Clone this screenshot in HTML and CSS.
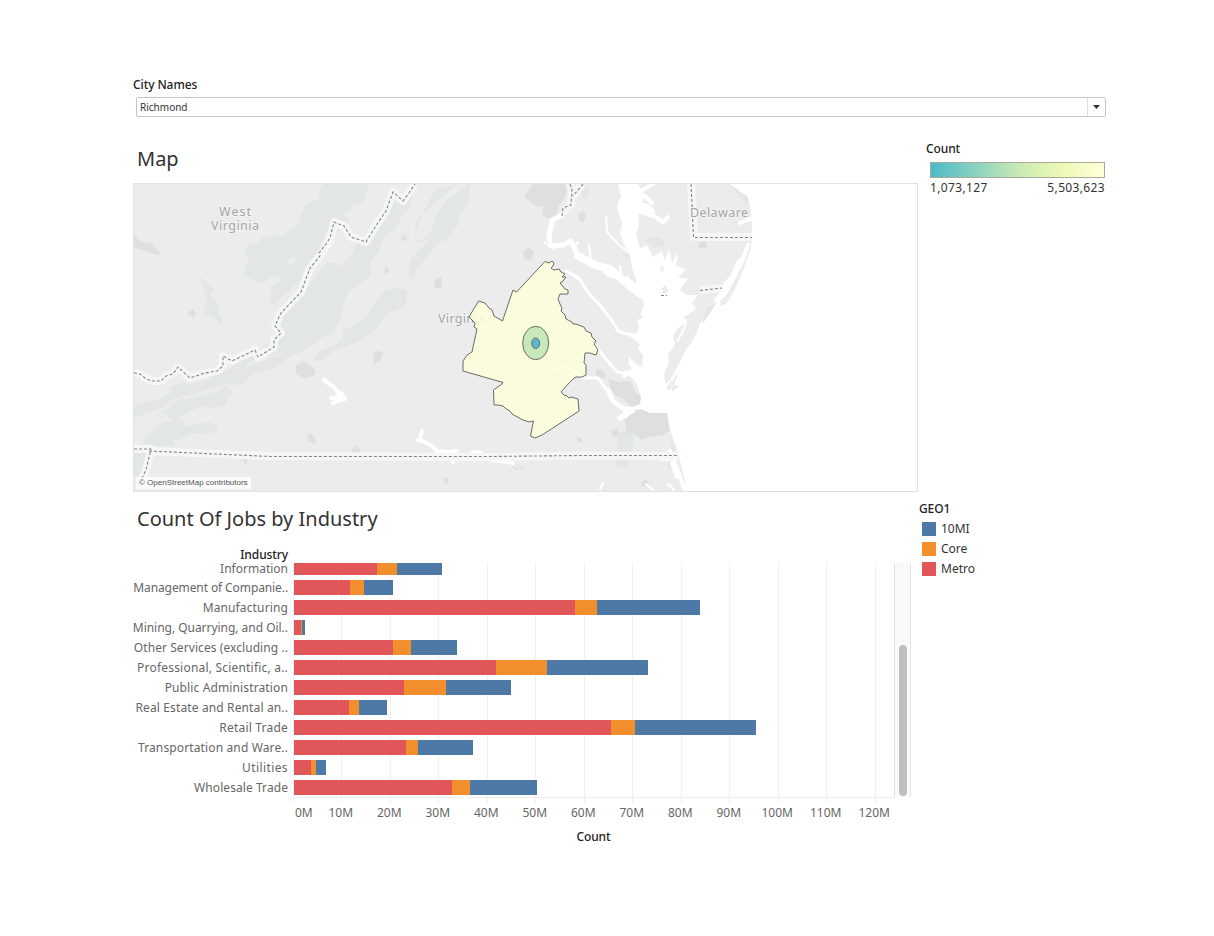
FILE: index.html
```html
<!DOCTYPE html>
<html lang="en">
<head>
<meta charset="utf-8">
<title>Count Of Jobs by Industry</title>
<link rel="stylesheet" href="styles.css">
</head>
<body>
<main class="dashboard">
  <section class="filter">
    <div class="label filter-label">City Names</div>
    <div class="select"><span class="select-value">Richmond</span><span class="select-arrow"><svg width="7" height="4" viewBox="0 0 7 4"><path d="M0 0h7L3.5 4z" fill="#333"/></svg></span></div>
  </section>
  <div class="row map-row">
    <section class="map-panel">
      <h2 class="title map-title">Map</h2>
      <div class="map">
        <svg class="map-svg" viewBox="134 184 783 307" width="783" height="307">
          <rect x="133" y="183" width="785" height="309" fill="#fff"/>
          <g fill="#ececec">
            <path d="M133 183H618L621 197L617 204L618 212L622 223L620 233L623 243L627 250L630 256L632 268L635 277L637 284L631 280L627 275L625 280L619 275L611 269L603 264L596 265L608 277L619 279L624 284L632 292L643 300L644 306L641 314L643 318L637 320L639 328L636 334L628 332L635 340L640 344L638 348L643 356L642 367L636 364L628 356L632 370L624 371L632 378L637 385L641 397L640 402L632 407L626 406L631 411L637 409L650 413L667 413L669 427L675 443L680 460L687 491H133Z"/>
            <path d="M637 183L644 195L640 201L652 206L656 213L645 215L638 213L639 225L636 234L640 248L647 245L653 257L662 251L665 261L669 248L672 263L678 252L676 266L686 270L678 277L688 279L680 289L686 295L698 295L692 303L696 309L684 317L686 322L677 329L673 337L675 344L668 355L669 362L664 374L665 381L668 391L671 388L673 374L680 362L686 350L693 340L700 324L706 313L716 301L719 294L724 282L731 275L736 262L743 255L749 241L752 230L751 211L748 197L738 190L730 184Z"/>
            <path d="M752 230L751 248L742 273L734 291L726 304L721 306L720 301L727 294L737 276L743 261L747 252ZM660 268l3-3 1 5-3 2zM662 288l4-3 2 7-5 2zM678 373l-4 12 5 1-7 6-1-4 3-15z"/>
          </g>
          <g fill="#e2e7e5">
            <path d="M323 183L318 192L320 198L307 204L302 211L298 225L290 230L282 237L275 235L262 237L257 243L249 244L245 251L248 258L244 276L254 280L262 284L270 278L277 276L282 279L271 288L270 303L276 304L280 299L298 283L312 266L326 232L333 222L347 228L352 210L364 200L370 183Z"/>
            <path d="M415 187L403 196L396 193L390 205L383 220L374 235L358 240L344 263L327 263L313 279L299 300L283 313L281 324L278 338L264 346L251 356L241 360L232 367L221 374L213 375L205 381L190 384L180 383L168 388L172 391L160 399L150 401L133 407V419L146 413L160 408L172 405L189 396L205 390L226 384L241 385L252 374L265 371L277 367L291 356L304 351L321 338L334 333L341 317L345 300L350 290L363 281L371 277L370 264L377 254L383 241L388 234L396 229L402 216L410 207Z"/>
            <path d="M457 184L440 188L433 193L423 213L416 232L415 242L424 238L430 233L437 214L446 201L457 193L468 184H470L468 203L459 215L458 225L447 240L437 243L427 257L418 268L413 280L408 273L410 260L423 247L428 239L415 243L416 220Z"/>
            <path d="M407 290V303L399 309L388 313L376 328L367 336L356 342L349 345L335 351L321 360L312 361L318 352L334 346L343 338L343 330L353 327L363 320L377 300L385 291L396 288Z"/>
            <path d="M163 413L180 399L195 398L205 394L218 391L226 385L233 393L227 397L226 405L215 408L205 406L195 409L184 414L173 420ZM144 440L160 424L178 418L184 421L183 428L195 424L209 422L218 427L216 432L204 434L190 433L180 440L173 440L173 446H141ZM133 453h16l-6 25-10-2zM199 276l9 8 7 6-7 4 5 4 6 6-1 9 4 5-1 8-8-9-5-2-5-1 2-7 2-8-2-6z"/>
            <path d="M617 433l17-4-2 25-6 15-10-3zM670 441l6 8-5 5-4 12 10 8-4-14zM645 240l6-3h8l6 4-2 6h-10zM729 184l19 13v8zM704 322l13-20-10 6-5 15zM580 190l5-6 5 5-4 13zM517 463l8 7-5 1z"/>
          </g>
          <g fill="#ececec">
            <path d="M329 241L334 222L347 228L356 241L353 252L341 267L334 262L325 262ZM372 183L365 204L372 213L376 220L388 191L382 184ZM355 202l-6 10-7 2 6 4 7-1 4-8zM292 257l-6 5 4 3 8-7zM182 400l36-8-34 5zM160 409l42-21-32 13zM244 368l48-18-39 10z"/>
          </g>
          <g fill="#dedfdf">
            <path d="M524 197l9-14h32l2 11-9 13-2 9-6 4-8-6 2-7-8-1zM133 234l8 8 11 1 3 4 6 7-6 1-9-4-13-4zM295 366l9-5 9 6 3 4-3 5-8 3-9-5zM373 354l6-4 4 3-2 7-7 5zM523 252l6-5 5 5-3 9-6-2zM434 281l7-5 1 13-7-1zM401 237l5-3 1 6-5 1zM578 214l5-3 3 3-2 8-5-1zM187 313l6-4 3 4-2 5-4-2zM307 436l4-3 5 7-2 4-5-3zM352 449l5-4 4 6-3 4-6-1zM384 269l4-2 1 5-4 2zM596 369l6 1 4 5-1 4-9-3zM443 479l5-2 1 5-4 2zM576 436l5 2 2 5-5-1zM609 379l10 3 12-1 4 11 6 4-1 8-8 3-9-8-7-3-6-8zM624 417l8-3 9-5 9 4h17l3 17-6 5-15 2-7 3-9-7-6 1zM611 431l6-3 2 8-7 1zM641 482l6-3 1 6-6 2zM699 243l5-3 3 4-2 5-6-1zM512 466l7 2-4 2zM625 254l4 1-3 4zM400 302l4-3 2 4zM243 459l5 1-3 5z"/>
          </g>
          <g fill="none" stroke="#fff" stroke-linejoin="round" stroke-linecap="round">
            <path stroke-width="5" d="M562 215L552 220L549 237L551 246L563 245L571 241L578 256L592 264L608 268L620 279L638 289"/>
            <path stroke-width="8" d="M578 256L595 265L610 269L624 281L640 294"/>
            <path stroke-width="2" d="M554 249l-10-7M606 216l1 16 12 13 8 6M589 245l2 16M620 266l2 14M566 271l12 8M578 242l-4 6"/>
            <path stroke-width="3" d="M566 271L578 277L589 294L599 304L613 322L618 331L636 337M596 347L606 359L617 372L632 374M583 378L598 378L606 389L614 402L622 406L626 417"/>
            <path stroke-width="5" d="M608 390L613 401L624 409L632 411L620 418"/>
            <path stroke-width="4" d="M630 363l7 8M636 368l-12 8M640 207l-2-15 10-5 6-4M640 212l14 4 9 6 5-5M716 300l10-12 14-22 8-21M637 205l7-10 8 8M740 223l12-5"/>
            <path stroke-width="4" d="M324 380l5 4 5 3 5 7 5 5M331 398l8-1 6 2-9 2M336 402l-3 1M341 393l4 5"/>
            <path stroke-width="4" d="M418 440l5 1 9 5 6 6 6-1M422 432l-2 6M440 453l17-2M450 453l3 9M473 452l8 1 3 4 9 3 20 3M670 451l7 18 8 22M672 463l5 14"/>
            <path stroke-width="2" d="M603 483l-3 6M646 484l8 7M668 484l6 6M678 340l7-13 1-7M662 460h8M664 388l12-14M422 429v4"/>
          </g>
          <g class="halo"><path d="M134 373L140 374L151 381L161 381L166 376L173 374L178 367L190 378L205 373L217 371L223 366L223 356L232 361L255 350L258 357L274 347L274 340L281 333L275 326L281 313L301 292L310 268L320 256L330 240L334 222L344 226L351 237L366 242L377 224L386 211L393 192L403 201L415 184M134 449H151L146 470L141 480M149 451L271 456L487 457L584 455.500L678 456M691 184L694 237H752M700 290.500L722 288M570 184L572 190L571 205L563 212M583 184L573 196"/></g>
          <g class="border"><path d="M134 373L140 374L145 378L151 381L161 381L166 376L173 374L178 367L190 378L205 373L217 371L223 366L223 356L232 361L255 350L258 357L274 347L274 340L281 333L275 326L281 313L301 292L310 268L320 256L319 253L326 244L330 238L334 222L344 226L351 237L366 242L377 224L386 211L393 192L403 201L409 193L415 184M134 449H151L146 470L141 480M149 451L271 456.500L487 456.500L584 455.500L678 455.500M691 184L693.500 237.500H752M700 290.500L722 288M570 184L572 190L571 205L563 208L562 216M583 184L573 196M661 295.500h6"/></g>
          <g class="place"><text x="219" y="216" textLength="32">West</text><text x="211" y="230" textLength="48">Virginia</text><text x="438" y="323" textLength="47">Virginia</text><text x="690" y="217" textLength="58">Delaware</text></g>
          <g stroke="#6b6b64" stroke-width="1" stroke-linejoin="round">
            <path fill="#fdfedb" fill-opacity=".88" d="M545 261.500L549 263L552 261L554 263L553 266L551 268L554 270L559 269L561 272L565 274L562 277L566 277L563 281L560 283L565 289L568 290L568 294H560L558 299L560 304L562 308L561 311L565 315L566 319L572 322L573 324L576 324L581 326L584 327L586 331L591 333L592 337L596 341L594 344L598 350L596 355L590 353L585 353L584 363L586 365V375L582 377L576 377L573 379L570 382L561 392L564 395L567 396L569 398L571 397L578 399L579 411L542 435L535 438L530.500 436L533.500 421L529 422L523 420L512 414L510 411L505 408L503 406L498 405H494L493.500 390L502 384L503 382.500L463 371V361L467 355L472 352L477 329L474 327L475 323L469 317L478.500 301L485 303L489 308L492 310L494 316L502.500 321L513 290L516.500 292Z"/>
            <path d="M551 367l8 2 7-2 10 6 5 3" fill="none" stroke="#ffffea" stroke-width="2"/>
            <ellipse cx="535.700" cy="343" rx="13" ry="16.700" fill="#c7e9b9"/>
            <ellipse cx="535.700" cy="343.300" rx="4" ry="5.300" fill="#5bb8cc"/>
          </g>
        </svg>
        <span class="credit">© OpenStreetMap contributors</span>
      </div>
    </section>
    <aside class="ramp-legend">
      <div class="label">Count</div>
      <div class="ramp"></div>
      <div class="ramp-values"><span>1,073,127</span><span>5,503,623</span></div>
    </aside>
  </div>
  <div class="row chart-row">
    <section class="chart-panel">
      <h2 class="title chart-title">Count Of Jobs by Industry</h2>
      <div class="chart">
        <div class="label names-head">Industry</div>
        <div class="names">
          <span class="clipped">Information</span><span class="tight">Management of Companie..</span><span>Manufacturing</span><span class="normal">Mining, Quarrying, and Oil..</span><span class="slight">Other Services (excluding ..</span><span class="wide">Professional, Scientific, a..</span><span>Public Administration</span><span>Real Estate and Rental an..</span><span class="wide">Retail Trade</span><span>Transportation and Ware..</span><span class="wider">Utilities</span><span class="slight">Wholesale Trade</span>
        </div>
        <div class="plot">
          <div class="bar clipped"><i style="width:83px"></i><i style="width:20px"></i><i style="width:45px"></i></div>
          <div class="bar"><i style="width:56px"></i><i style="width:14px"></i><i style="width:29px"></i></div>
          <div class="bar"><i style="width:281px"></i><i style="width:22px"></i><i style="width:103px"></i></div>
          <div class="bar"><i style="width:7px"></i><i style="width:1px"></i><i style="width:3px"></i></div>
          <div class="bar"><i style="width:99px"></i><i style="width:18px"></i><i style="width:46px"></i></div>
          <div class="bar"><i style="width:202px"></i><i style="width:51px"></i><i style="width:101px"></i></div>
          <div class="bar"><i style="width:110px"></i><i style="width:42px"></i><i style="width:65px"></i></div>
          <div class="bar"><i style="width:55px"></i><i style="width:10px"></i><i style="width:28px"></i></div>
          <div class="bar"><i style="width:317px"></i><i style="width:24px"></i><i style="width:121px"></i></div>
          <div class="bar"><i style="width:112px"></i><i style="width:12px"></i><i style="width:55px"></i></div>
          <div class="bar"><i style="width:17px"></i><i style="width:5px"></i><i style="width:10px"></i></div>
          <div class="bar"><i style="width:158px"></i><i style="width:18px"></i><i style="width:67px"></i></div>
        </div>
        <div class="scrollbar"><div class="thumb"></div></div>
        <div class="axis"><span class="first">0M</span><span>10M</span><span>20M</span><span>30M</span><span>40M</span><span>50M</span><span>60M</span><span>70M</span><span>80M</span><span>90M</span><span>100M</span><span>110M</span><span>120M</span></div>
        <div class="label axis-title">Count</div>
      </div>
    </section>
    <aside class="color-legend">
      <div class="label">GEO1</div>
      <div class="key"><b class="blue"></b>10MI</div>
      <div class="key"><b class="orange"></b>Core</div>
      <div class="key"><b class="red"></b>Metro</div>
    </aside>
  </div>
</main>
</body>
</html>
```
FILE: styles.css
```css
* { box-sizing: border-box; }
body { margin: 0; background: #fff; color: #333; font: 12px/20px "Noto Sans", sans-serif; }
.dashboard { width: 1106px; padding: 75px 0 0 133px; }
.label { font-weight: 500; color: #222; line-height: 20px; letter-spacing: -.1px; white-space: nowrap; }
.title { margin: 0; font-weight: 400; font-size: 20px; line-height: 28px; color: #333; padding-left: 4px; white-space: nowrap; }
.select { display: flex; margin: 2px 0 0 3px; width: 970px; height: 20px; border: 1px solid #c4c4c4; border-radius: 2px; }
.select-value { flex: 1; padding-left: 3px; font-size: 10px; line-height: 19px; }
.select-arrow { display: flex; align-items: center; justify-content: center; width: 18px; border-left: 1px solid #ddd; }
.row { display: flex; }
.map-row { height: 382px; }
.map-panel { width: 785px; padding-top: 28px; }
.map-title { height: 38px; }
.map { position: relative; width: 785px; height: 309px; border: 1px solid #e2e2e2; overflow: hidden; }
.map-svg { display: block; }
.halo { fill: none; stroke: #f5f6f6; stroke-width: 8; stroke-linejoin: round; }
.border { fill: none; stroke: #858585; stroke-width: 1.1; stroke-dasharray: 3 2; }
.place { font: 12.5px "Noto Sans", sans-serif; fill: #a3a6a5; paint-order: stroke; stroke: #f3f3f3; stroke-width: 2px; }
.credit { position: absolute; left: 2px; bottom: 2px; width: 115px; height: 12px; padding-left: 3px; background: rgba(255,255,255,.8); font: 8px/12px "Liberation Sans", sans-serif; color: #555; white-space: nowrap; }
.ramp-legend { width: 180px; margin-left: 8px; padding-top: 22px; }
.ramp { margin: 3px 0 0 4px; width: 175px; height: 16px; border: 1px solid #aaa998; background: linear-gradient(90deg, #4bbaca, #c7e9b4 50%, #edf8b5 75%, #ffffd9); }
.ramp-values { display: flex; justify-content: space-between; margin: 0 1px 0 4px; line-height: 20px; letter-spacing: .35px; }
.chart-panel { width: 785px; padding-top: 6px; }
.chart-title { height: 38px; }
.chart { display: grid; grid-template-columns: 155px 606px 17px; grid-template-rows: 20px 240px 18px 30px; }
.names-head { grid-column: 1; text-align: right; padding-top: 2px; }
.names { grid-column: 1; grid-row: 2; display: flex; flex-direction: column; align-items: flex-end; color: #666; letter-spacing: .13px; }
.names span { height: 20px; line-height: 20px; white-space: nowrap; }
.names .clipped { height: 15px; line-height: 11px; letter-spacing: 0; }
.names .tight { letter-spacing: -.1px; }
.names .normal { letter-spacing: -.03px; }
.names .slight { letter-spacing: .07px; }
.names .wide { letter-spacing: .2px; }
.names .wider { letter-spacing: .4px; }
.plot { grid-column: 2; grid-row: 2; margin-left: 5px; width: 602px; padding-left: 1px; background: linear-gradient(#eee, #eee) 0 234px / 602px 1px no-repeat, repeating-linear-gradient(90deg, #f0f0f0 0 1px, transparent 1px 48.46px); }
.bar { display: flex; height: 20px; padding: 2px 0 3px; }
.bar.clipped { height: 15px; padding-top: 0; }
.bar i { height: 100%; background: #e15759; }
.bar i:nth-child(2) { background: #f28e2b; }
.bar i:nth-child(3) { background: #4e79a7; }
.scrollbar { grid-column: 3; grid-row: 2; height: 234px; width: 17px; border: solid #e2e2e2; border-width: 0 1px; background: #f9f9f9; padding: 82px 0 0 4px; }
.thumb { width: 8px; height: 151px; border-radius: 4px; background: #bfbfbf; }
.axis { grid-column: 2; grid-row: 3; display: flex; color: #666; }
.axis span { width: 48.5px; flex: none; text-align: center; }
.axis .first { width: 28.5px; padding-left: 7px; text-align: left; }
.axis-title { grid-column: 2; grid-row: 4; text-align: center; padding: 6px 0 0 5px; }
.color-legend { margin-left: 1px; }
.key { display: flex; align-items: center; gap: 5px; height: 20px; padding-left: 3px; }
.key b { width: 14px; height: 14px; }
.blue { background: #4e79a7; }
.orange { background: #f28e2b; }
.red { background: #e15759; }
```
